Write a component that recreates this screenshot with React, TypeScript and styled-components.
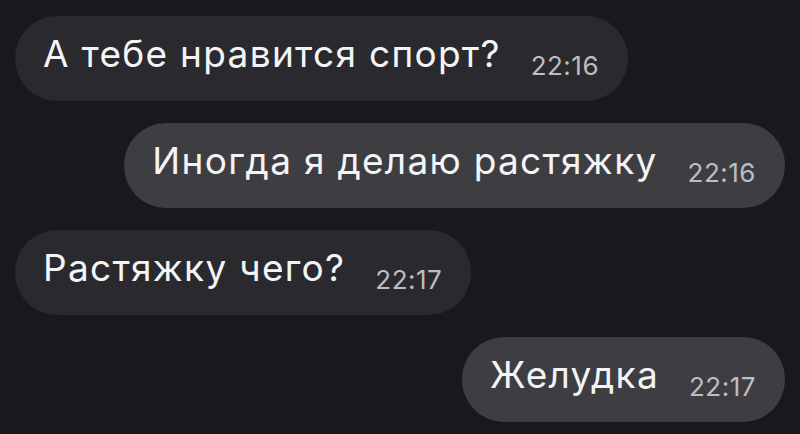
import React from 'react';
import styled, { createGlobalStyle } from 'styled-components';

const GlobalStyle = createGlobalStyle`
    html, body {
        margin: 0;
        padding: 0;
        background: #19181d;
    }
    body {
        font-family: Inter, "Noto Sans", "Liberation Sans", sans-serif;
        -webkit-font-smoothing: antialiased;
    }
`;

const Chat = styled.div`
    width: 800px;
    height: 434px;
    box-sizing: border-box;
    padding: 16px 15px 0;
    display: flex;
    flex-direction: column;
    gap: 22px;
    background: #19181d;
    overflow: hidden;
`;

const Bubble = styled.div<{ $out?: boolean }>`
    align-self: ${(p) => (p.$out ? 'flex-end' : 'flex-start')};
    height: 85px;
    box-sizing: border-box;
    padding: 3px 29px 0 28px;
    border-radius: 42px;
    background: ${(p) => (p.$out ? '#3e3e42' : '#2a2a2e')};
    color: #f4f4f6;
    white-space: nowrap;
    display: flex;
    align-items: center;
`;

const Line = styled.div`
    font-size: 37px;
    line-height: 40px;
    letter-spacing: 1.3px;
`;

const Time = styled.span`
    font-size: 26px;
    color: #bdbdc2;
    margin-left: 30px;
    vertical-align: -8px;
    letter-spacing: 0.5px;
`;

interface IMessage {
    text: string;
    time: string;
    out?: boolean;
}

const messages: IMessage[] = [
    { text: 'А тебе нравится спорт?', time: '22:16' },
    { text: 'Иногда я делаю растяжку', time: '22:16', out: true },
    { text: 'Растяжку чего?', time: '22:17' },
    { text: 'Желудка', time: '22:17', out: true },
];

const App: React.FunctionComponent = () => {
    return (
        <>
            <GlobalStyle />
            <Chat>
                {messages.map((m, i) => (
                    <Bubble key={i} $out={m.out}>
                        <Line>
                            {m.text}
                            <Time>{m.time}</Time>
                        </Line>
                    </Bubble>
                ))}
            </Chat>
        </>
    );
};

export default App;
